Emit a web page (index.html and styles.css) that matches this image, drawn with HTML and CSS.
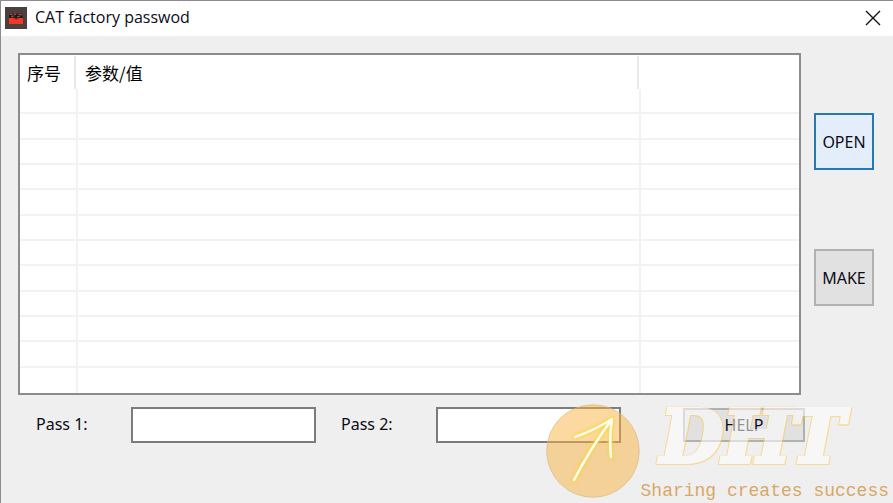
FILE: index.html
```html
<!DOCTYPE html>
<html lang="en">
<head>
<meta charset="utf-8">
<title>CAT factory passwod</title>
<link rel="stylesheet" href="styles.css">
</head>
<body>
<div class="window">
  <header class="titlebar">
    <svg class="app-icon" viewBox="0 0 22 22" aria-hidden="true">
      <rect width="22" height="22" fill="#4b3f40"/>
      <path d="M4 11V8l3-2 3 2 3-2 4 1 1 4z" fill="#241c1e"/>
      <path d="M5 7l3 1M9 8l2-1M13 7l4 1M6 10l3-1M12 10l3-1" stroke="#c8473a" stroke-width="1"/>
      <path d="M4 11h5l2 2 3-2h4v6H4z" fill="#f03a20"/>
    </svg>
    <h1 class="title">CAT factory passwod</h1>
    <button class="close" type="button" aria-label="Close">
      <svg viewBox="0 0 16 16" aria-hidden="true"><path d="M1 1l14 14M15 1L1 15" fill="none" stroke="#111" stroke-width="1.4"/></svg>
    </button>
  </header>
  <main class="content">
    <div class="list">
      <table class="grid">
        <colgroup><col class="col-no"><col><col class="col-extra"></colgroup>
        <thead>
          <tr><th><div class="head">序号</div></th><th><div class="head">参数/值</div></th><th></th></tr>
        </thead>
        <tbody>
          <tr><td></td><td></td><td></td></tr>
          <tr><td></td><td></td><td></td></tr>
          <tr><td></td><td></td><td></td></tr>
          <tr><td></td><td></td><td></td></tr>
          <tr><td></td><td></td><td></td></tr>
          <tr><td></td><td></td><td></td></tr>
          <tr><td></td><td></td><td></td></tr>
          <tr><td></td><td></td><td></td></tr>
          <tr><td></td><td></td><td></td></tr>
          <tr><td></td><td></td><td></td></tr>
          <tr><td></td><td></td><td></td></tr>
          <tr><td></td><td></td><td></td></tr>
        </tbody>
      </table>
    </div>
    <div class="actions">
      <button class="btn btn-square btn-default" type="button">OPEN</button>
      <button class="btn btn-square" type="button">MAKE</button>
    </div>
    <form class="fields">
      <label class="label" for="pass1">Pass 1:</label>
      <input class="input" id="pass1" type="text">
      <label class="label" for="pass2">Pass 2:</label>
      <input class="input" id="pass2" type="text">
      <button class="btn btn-help" type="button">HELP</button>
    </form>
  </main>
  <div class="watermark">
    <svg class="badge" viewBox="0 0 94 94" aria-hidden="true">
      <defs><filter id="glow" x="-20%" y="-20%" width="140%" height="140%"><feGaussianBlur stdDeviation="1.8"/></filter></defs>
      <circle cx="47" cy="47" r="46.3" fill="#f8b443" fill-opacity=".5" stroke="#d6b77c" stroke-width=".6"/>
      <path d="M28 76Q44 45 66 15M29 33Q49 26 66 15Q63 34 65 53" fill="none" stroke="#ffd32e" stroke-opacity=".8" stroke-width="5" stroke-linecap="round" stroke-linejoin="round" filter="url(#glow)"/>
      <path d="M28 76Q44 45 66 15M29 33Q49 26 66 15Q63 34 65 53" fill="none" stroke="#fffdf0" stroke-width="2.6" stroke-linecap="round" stroke-linejoin="round"/>
    </svg>
    <div class="brand">
      <span class="brand-name">DHT</span>
      <span class="tagline">Sharing creates success</span>
    </div>
  </div>
</div>
</body>
</html>
```
FILE: styles.css
```css
* { box-sizing: border-box; }

body {
  margin: 0;
  font-family: "Noto Sans", "Noto Sans CJK SC", sans-serif;
  color: #0c0c18;
}

.window {
  position: relative;
  display: flex;
  flex-direction: column;
  min-height: 100vh;
  overflow: hidden;
  background: #efefef;
  border-top: 1px solid #8c8c8c;
  border-left: 1px solid #8c8c8c;
}

.titlebar {
  display: flex;
  align-items: center;
  gap: 8px;
  height: 35px;
  padding: 0 12px 2px 4px;
  background: #fff;
}

.app-icon { width: 22px; height: 22px; }

.title {
  flex: 1;
  margin: 0;
  padding-bottom: 2px;
  font: 400 16px/24px "Open Sans", sans-serif;
}

.close {
  display: flex;
  padding: 0;
  border: 0;
  background: none;
}

.close svg { width: 16px; height: 16px; }

.content {
  flex: 1;
  display: grid;
  grid-template-columns: 1fr 60px;
  grid-template-rows: 1fr 36px;
  column-gap: 13px;
  row-gap: 12px;
  padding: 17px 19px 60px 17px;
}

.list {
  display: flex;
  border: 2px solid #8c8c8c;
  background: #fff;
}

.grid {
  width: 100%;
  table-layout: fixed;
  border-collapse: separate;
  border-spacing: 0;
}

.col-no { width: 58px; }
.col-extra { width: 158px; }

.grid th {
  height: 34px;
  padding: 1px 2px 0 0;
  text-align: left;
  font-weight: 400;
}

.head {
  height: 33px;
  padding-left: 7px;
  border-right: 2px solid #e8e8e8;
  font: 400 17px/34px "Noto Sans CJK SC", sans-serif;
  color: #000;
}

.grid td {
  height: 25px;
  padding: 0;
  border-right: 2px solid #f2f2f2;
  border-bottom: 2px solid #f2f2f2;
}

.grid td:last-child { border-right: 0; }
.grid tr:last-child td { border-bottom: 0; }

.actions {
  display: flex;
  flex-direction: column;
  gap: 79px;
  padding-top: 60px;
}

.btn {
  padding: 0;
  border: 2px solid #b0b0b0;
  background: #e1e1e1;
  color: #0c0c18;
  font: 400 16px/24px "Noto Sans", sans-serif;
}

.btn-square { height: 57px; }

.btn-default {
  border-color: #2479b2;
  background: #e4eefa;
}

.fields {
  grid-column: 1 / -1;
  display: flex;
  align-items: center;
  padding: 0 69px 0 18px;
}

.label {
  width: 95px;
  flex: none;
  padding-bottom: 3px;
  font-size: 16px;
  line-height: 24px;
}

.input {
  width: 185px;
  height: 36px;
  margin-right: 25px;
  padding: 0 6px;
  border: 2px solid #7c7c7c;
  background: #fff;
  font: 400 16px/24px "Noto Sans", sans-serif;
}

.btn-help {
  width: 122px;
  height: 34px;
  margin-left: auto;
}

.watermark {
  position: absolute;
  right: 4px;
  bottom: 0;
  display: flex;
  align-items: center;
  pointer-events: none;
}

.badge { width: 94px; height: 94px; margin: 0 1px 4px 0; }

.brand {
  display: flex;
  flex-direction: column;
  gap: 7px;
}

.brand-name {
  padding-left: 20px;
  font: italic 700 72px/70px "DejaVu Serif", serif;
  color: #fff;
  -webkit-text-stroke: 4px #fff;
  filter: drop-shadow(1px 0 #ffc94d) drop-shadow(-1px 0 #ffc94d) drop-shadow(0 1px #ffc94d);
  opacity: .55;
}

.tagline {
  font: 400 18px/24px "Liberation Mono", monospace;
  color: #d9a866;
}
```
